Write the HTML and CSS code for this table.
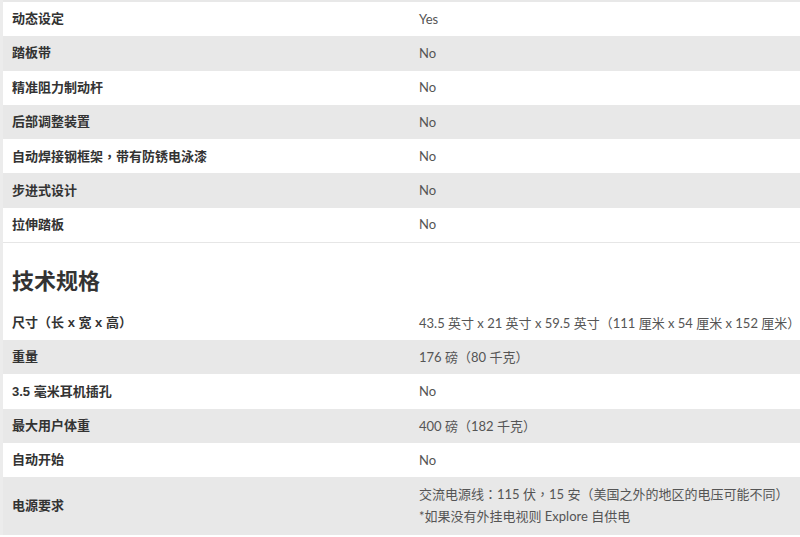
FILE: index.html
```html
<!DOCTYPE html>
<html lang="zh-CN">
<head>
<meta charset="utf-8">
<link rel="stylesheet" href="styles.css">
<title>规格</title>
</head>
<body>
<div class="page">
  <div class="specs specs-top">
    <div class="row"><div class="label">动态设定</div><div class="value">Yes</div></div>
    <div class="row alt"><div class="label">踏板带</div><div class="value">No</div></div>
    <div class="row"><div class="label">精准阻力制动杆</div><div class="value">No</div></div>
    <div class="row alt"><div class="label">后部调整装置</div><div class="value">No</div></div>
    <div class="row"><div class="label">自动焊接钢框架<span class="p" lang="zh-TW">，</span>带有防锈电泳漆</div><div class="value">No</div></div>
    <div class="row alt"><div class="label">步进式设计</div><div class="value">No</div></div>
    <div class="row last"><div class="label">拉伸踏板</div><div class="value">No</div></div>
  </div>
  <h2 class="heading">技术规格</h2>
  <div class="specs">
    <div class="row"><div class="label">尺寸<span class="p" lang="zh-TW">（</span>长 x 宽 x 高<span class="p" lang="zh-TW">）</span></div><div class="value">43.5 英寸 x 21 英寸 x 59.5 英寸<span class="p" lang="zh-TW">（</span>111 厘米 x 54 厘米 x 152 厘米<span class="p" lang="zh-TW">）</span></div></div>
    <div class="row alt"><div class="label">重量</div><div class="value">176 磅<span class="p" lang="zh-TW">（</span>80 千克<span class="p" lang="zh-TW">）</span></div></div>
    <div class="row"><div class="label">3.5 毫米耳机插孔</div><div class="value">No</div></div>
    <div class="row alt"><div class="label">最大用户体重</div><div class="value">400 磅<span class="p" lang="zh-TW">（</span>182 千克<span class="p" lang="zh-TW">）</span></div></div>
    <div class="row"><div class="label">自动开始</div><div class="value">No</div></div>
    <div class="row alt tall"><div class="label">电源要求</div><div class="value">交流电源线<span class="p" lang="zh-TW">：</span>115 伏<span class="p" lang="zh-TW">，</span>15 安<span class="p" lang="zh-TW">（</span>美国之外的地区的电压可能不同<span class="p" lang="zh-TW">）</span><br>*如果没有外挂电视则 Explore 自供电</div></div>
  </div>
</div>
</body>
</html>
```

FILE: styles.css
```css
html, body {
  margin: 0;
  padding: 0;
  background: #ffffff;
}

.page {
  border-left: 3px solid #ececec;
  width: 797px;
  overflow: hidden;
}

.specs-top {
  border-top: 2px solid #e8e8e8;
}

.row {
  display: grid;
  grid-template-columns: 407px 1fr;
  background: #ffffff;
  align-items: center;
  height: 34.3px;
  box-sizing: border-box;
}

.row.alt {
  background: #e8e8e8;
}

.row.last {
  border-bottom: 1px solid #e6e6e6;
  height: 35px;
}

.row.tall {
  height: 58px;
}

.row.tall .value {
  line-height: 22px;
  padding-bottom: 2px;
}

.p {
  font-family: "Noto Sans CJK TC", sans-serif;
}

.label {
  padding-left: 9px;
  font-family: "Liberation Sans", "Noto Sans CJK SC", sans-serif;
  font-weight: 700;
  font-size: 13px;
  color: #333333;
  line-height: 20px;
  white-space: nowrap;
}

.value {
  padding-left: 9px;
  font-family: "Lato", "Noto Sans CJK SC", sans-serif;
  font-size: 13px;
  color: #555555;
  line-height: 23px;
  white-space: nowrap;
}

.heading {
  margin: 0;
  padding: 24px 0 9px 9px;
  font-family: "Liberation Sans", "Noto Sans CJK SC", sans-serif;
  font-weight: 700;
  font-size: 22px;
  line-height: 30px;
  color: #333333;
}
```
